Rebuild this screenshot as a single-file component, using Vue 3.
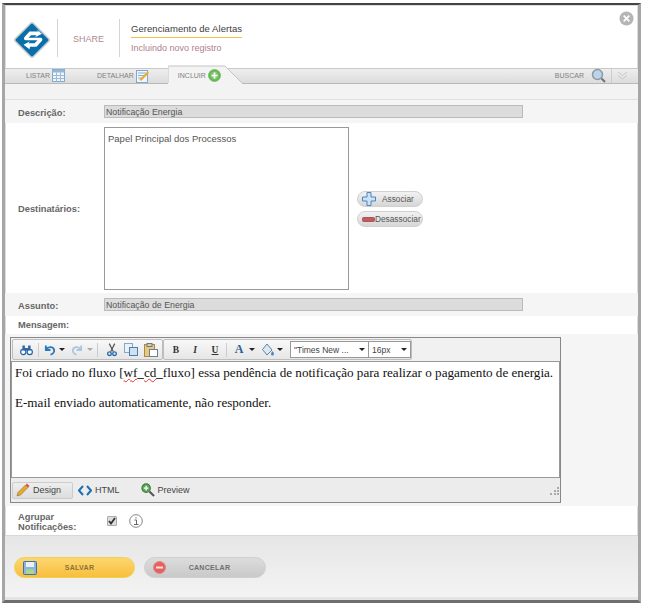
<template>
  <div class="page">
    <div class="win">
      <button class="close" aria-label="Fechar"><svg width="15" height="15" viewBox="0 0 16 16"><circle cx="8" cy="8" r="7.500" fill="#b5b5b5"/><path d="M5 5l6 6M11 5l-6 6" stroke="#fff" stroke-width="1.800"/></svg></button>
      <header class="head">
        <svg class="logo" width="38" height="38" viewBox="0 0 38 38">
          <path d="M17.500 2.500Q19 1 20.500 2.500L35.500 17.500Q37 19 35.500 20.500L20.500 35.500Q19 37 17.500 35.500L2.500 20.500Q1 19 2.500 17.500z" fill="#0a6ea8" stroke="#c9cdd0" stroke-width="1.500"/>
          <path d="M27 10.500H16.500l-5 5.500c-1 1.400-.5 3.300 1.500 3.300h11.500l-3 3h-6l1.500-2-6.500 3.500 6 4.500.5-2.500h6.500l5.500-6c1-1.500 0-3-1.500-3H15.500l2.500-2.500h5.500l-1.500 2 7-3.500-6-4.500z" fill="#fff"/>
        </svg>
        <div class="vline"></div>
        <div class="share">SHARE</div>
        <div class="vline"></div>
        <div class="titles">
          <div class="title">Gerenciamento de Alertas</div>
          <div class="subtitle">Incluindo novo registro</div>
        </div>
      </header>

      <nav class="tabs">
        <div class="tab t1">LISTAR
          <svg width="13" height="13" viewBox="0 0 13 13"><rect x=".5" y=".5" width="12" height="12" fill="#eef5fb" stroke="#7fa9cf"/><rect x=".5" y=".5" width="12" height="3" fill="#8fb8dc"/><path d="M4.500 3.500v9M8.500 3.500v9M.5 6.500h12M.5 9.500h12" stroke="#9dbbd6"/></svg>
        </div>
        <div class="tab t2">DETALHAR
          <svg width="14" height="14" viewBox="0 0 14 14"><rect x=".5" y="1.500" width="11" height="12" fill="#eef5fb" stroke="#7fa9cf"/><path d="M2 4h8M2 6.500h6M2 9h4" stroke="#8fb0cc"/><path d="M5 12l8-8-1.500-1.500-8 8z" fill="#eda92e"/></svg>
        </div>
        <div class="tab t3">
          <svg class="tabshape" width="80" height="19" viewBox="0 0 80 19"><path d="M0 18V2Q0 1 1 1H57L74 18" fill="#f3f3f3" stroke="#c4c4c4"/><path d="M0 18.500H74" stroke="#f3f3f3" stroke-width="1"/></svg>
          <span class="t3in">INCLUIR
            <svg width="13" height="13" viewBox="0 0 13 13"><circle cx="6.500" cy="6.500" r="6" fill="#67b257" stroke="#7fbe71"/><circle cx="6.500" cy="6.500" r="4" fill="#7ec96d"/><path d="M6.500 3.500v6M3.500 6.500h6" stroke="#fff" stroke-width="1.700"/></svg>
          </span>
        </div>
        <div class="search">BUSCAR
          <svg width="15" height="15" viewBox="0 0 15 15"><circle cx="6.500" cy="6.500" r="5" fill="#bcd3e8" stroke="#8b9aa6" stroke-width="1.500"/><path d="M10.500 10.500l3.500 3.500" stroke="#6d7479" stroke-width="2"/></svg>
          <span class="sep"></span>
          <svg width="11" height="9" viewBox="0 0 11 9"><path d="M1 1l4.500 3.500L10 1M1 4.500 5.500 8 10 4.500" fill="none" stroke="#c9c9c9"/></svg>
        </div>
      </nav>
      <div class="strip"></div>

      <div class="row alt r-desc">
        <label class="lbl">Descrição:</label>
        <div class="ro">Notificação Energia</div>
      </div>

      <div class="row r-dest">
        <label class="lbl">Destinatários:</label>
        <div class="listbox">Papel Principal dos Processos</div>
        <div class="assoc">
          <button class="pill">
            <svg width="14" height="14" viewBox="0 0 14 14"><path d="M5 .5h4v4.500h4.500v4H9v4.500H5V9H.5V5H5z" fill="#cfe2f3" stroke="#4b86bd"/></svg>
            <span class="pa">Associar</span>
          </button>
          <button class="pill">
            <svg width="13" height="5" viewBox="0 0 13 5"><rect x=".5" y=".5" width="12" height="4" rx="1" fill="#c05a63" stroke="#a8545b"/></svg>
            <span>Desassociar</span>
          </button>
        </div>
      </div>

      <div class="row alt r-desc">
        <label class="lbl">Assunto:</label>
        <div class="ro">Notificação de Energia</div>
      </div>

      <div class="row r-msg"><label class="lbl">Mensagem:</label></div>

      <div class="alt r-editor">
        <div class="editor">
          <div class="toolbar">
            <div class="group g1">
              <svg class="ic" width="13" height="12" viewBox="0 0 16 13"><circle cx="4" cy="9" r="3.200" fill="#fff" stroke="#1f5fa0" stroke-width="1.400"/><circle cx="12" cy="9" r="3.200" fill="#fff" stroke="#1f5fa0" stroke-width="1.400"/><path d="M3 1h3v6H3zM10 1h3v6h-3zM6 4h4v3H6z" fill="#2a69a8"/></svg>
              <span class="dv m5"></span>
              <svg class="ic m5" width="12" height="12" viewBox="0 0 13 12"><path d="M2 1v5h5M2.500 5.500C4 2.500 10 1.500 11 6c.4 2.500-1.500 4.500-4 5" fill="none" stroke="#2d78b8" stroke-width="2"/></svg>
              <i class="arr m3"></i>
              <svg class="ic m6" width="12" height="12" viewBox="0 0 13 12"><path d="M11 1v5H6M10.500 5.500C9 2.500 3 1.500 2 6c-.4 2.500 1.500 4.500 4 5" fill="none" stroke="#a9c6de" stroke-width="2"/></svg>
              <i class="arr lite m4"></i>
              <span class="dv m4"></span>
              <svg class="ic m9" width="10" height="14" viewBox="0 0 11 14"><path d="M2.500 0 7 9M8.500 0 4 9" stroke="#555" stroke-width="1.300"/><circle cx="2.700" cy="11" r="2" fill="none" stroke="#2d6fae" stroke-width="1.500"/><circle cx="8.300" cy="11" r="2" fill="none" stroke="#2d6fae" stroke-width="1.500"/></svg>
              <svg class="ic m7" width="14" height="13" viewBox="0 0 14 13"><rect x=".5" y=".5" width="8" height="9" fill="#eaf2f9" stroke="#86a7c5"/><rect x="5.500" y="4.500" width="8" height="8" fill="#cfe0f0" stroke="#4a7fb0"/></svg>
              <svg class="ic m6" width="14" height="14" viewBox="0 0 14 14"><rect x=".5" y="1.500" width="10" height="12" fill="#e8c77f" stroke="#a88a4a"/><rect x="3" y=".5" width="5" height="3" fill="#ccc" stroke="#777"/><rect x="5.500" y="6.500" width="8" height="7" fill="#fff" stroke="#6b7f90"/></svg>
            </div>
            <div class="group g2">
              <b class="fmt">B</b>
              <i class="fmt it m9">I</i>
              <u class="fmt m10">U</u>
              <span class="dv m6"></span>
              <span class="fontA m6">A</span>
              <i class="arr m4"></i>
              <svg class="ic m6" width="14" height="14" viewBox="0 0 14 14"><path d="M6 1 1.500 6.500 6 12l5-5z" fill="#dbe7f1" stroke="#5a84a8"/><path d="M11.500 8c1 1.500 1.500 2.200 1.500 3a1.500 1.500 0 0 1-3 0c0-.8.5-1.500 1.500-3z" fill="#4a88bf"/></svg>
              <i class="arr m2"></i>
              <div class="sel sel1 m7"><span>"Times New ...</span><i class="arr"></i></div>
              <div class="sel sel2"><span>16px</span><i class="arr"></i></div>
            </div>
          </div>
          <div class="content">
            <p>Foi criado no fluxo [<span class="sp">wf</span><span class="us">_</span><span class="sp">cd</span><span class="us">_</span>fluxo] essa pendência de notificação para realizar o pagamento de energia.</p>
            <p class="p2">E-mail enviado automaticamente, não responder.</p>
          </div>
          <div class="modes">
            <div class="mode active">
              <svg width="14" height="14" viewBox="0 0 14 14"><path d="M1 13l1-3.500 7.500-7.500 2.500 2.500L4.500 12z" fill="#e9a82e" stroke="#8a6a24" stroke-width=".6"/><path d="M9.500 2l1.500-1.500 2.500 2.500L12 4.500z" fill="#d9534f"/></svg>
              Design
            </div>
            <div class="mode html">
              <svg width="14" height="11" viewBox="0 0 14 11"><path d="M5 1 1 5.500 5 10M9 1l4 4.500L9 10" fill="none" stroke="#1f6fb2" stroke-width="2"/></svg>
              HTML
            </div>
            <div class="mode prev">
              <svg width="14" height="14" viewBox="0 0 15 15"><circle cx="5.500" cy="5.500" r="4.500" fill="#5ca85a" stroke="#3b7a3a" stroke-width="1.200"/><path d="M5.500 3v5M3 5.500h5" stroke="#fff" stroke-width="1.400"/><path d="M9 9l5 5" stroke="#555" stroke-width="2.200"/></svg>
              Preview
            </div>
            <svg class="grip" width="10" height="9" viewBox="0 0 10 9"><path d="M8 0h2v2H8zM5 3h2v2H5zM8 3h2v2H8zM1 6h2v2H1zM5 6h2v2H5zM8 6h2v2H8z" fill="#aaa"/></svg>
          </div>
        </div>
      </div>

      <div class="row r-group">
        <label class="lbl lbl2">Agrupar<br>Notificações:</label>
        <span class="check"><svg width="8" height="8" viewBox="0 0 8 8"><path d="M1 4l2 2.500L7 1" fill="none" stroke="#333" stroke-width="1.800"/></svg></span>
        <svg class="info" width="14" height="14" viewBox="0 0 14 14"><circle cx="7" cy="7" r="6.300" fill="#fff" stroke="#777" stroke-width=".9"/><path d="M5.500 6h2v4.500M5 10.500h4.500M7 3.200v1.300" fill="none" stroke="#666"/></svg>
      </div>

      <footer class="foot">
        <button class="btn save">
          <svg width="14" height="14" viewBox="0 0 14 14"><rect x=".5" y=".5" width="13" height="13" rx="1" fill="#8fb3dc" stroke="#3f6fa8"/><rect x="3" y="1" width="8" height="5" fill="#e9f0f8"/><rect x="3" y="8.500" width="8" height="4.500" fill="#a8d88c"/></svg>
          <span>SALVAR</span>
        </button>
        <button class="btn cancel">
          <svg width="13" height="13" viewBox="0 0 13 13"><circle cx="6.500" cy="6.500" r="6" fill="#e8605c" stroke="#d98a88"/><rect x="3" y="5.500" width="7" height="2" fill="#fbe3e2"/></svg>
          <span>CANCELAR</span>
        </button>
      </footer>
    </div>
  </div>
</template>

<script setup>
</script>

<style>
html, body { margin: 0; background: #fff; }
</style>

<style scoped>
.page { width: 645px; height: 606px; padding: 3px 4px 3px 2px; box-sizing: border-box; font-family: "Liberation Sans", Arial, sans-serif; overflow: hidden; }
.win { position: relative; height: 100%; box-sizing: border-box; background: #fff; border: solid #a6a6a6; border-width: 2px 3px 3px 3px; border-top-color: #444; border-bottom-color: #6e6e6e; box-shadow: inset 0 0 0 1px #ddd; display: flex; flex-direction: column; overflow: hidden; }
.close { position: absolute; top: 6px; right: 4px; padding: 0; border: 0; background: none; width: 15px; height: 15px; }
.head { height: 63px; display: flex; align-items: flex-start; flex: none; box-sizing: border-box; padding-top: 14px; }
.logo { margin: 2px 0 0 8px; flex: none; }
.vline { width: 1px; height: 38px; background: #d4d4d4; }
.logo + .vline { margin-left: 6px; }
.share { width: 61px; text-align: center; font-size: 9px; color: #b08a8f; margin-top: 15px; }
.titles { margin-left: 11px; padding-top: 3px; }
.title { font-size: 9.500px; color: #3c3c3c; padding-bottom: 2px; border-bottom: 1px solid #f2c240; line-height: 13px; letter-spacing: .05px; }
.subtitle { font-size: 9px; color: #b0808a; margin-top: 4px; line-height: 12px; }
.tabs { position: relative; height: 13px; padding-bottom: 1px; flex: none; background: linear-gradient(#eee, #dcdcdc); border-top: 1px solid #c9c9c9; border-bottom: 1px solid #b9b9b9; display: flex; align-items: center; font-size: 7px; color: #808080; }
.tab { display: flex; align-items: center; gap: 2px; }
.t1 { margin-left: 21px; }
.t2 { margin-left: 32px; }
.t3 { position: relative; margin-left: 18px; width: 80px; height: 14px; }
.tabshape { position: absolute; left: 0; top: -4px; }
.t3in { position: relative; display: flex; align-items: center; gap: 2px; padding-left: 10px; height: 100%; }
.search { margin-left: auto; display: flex; align-items: center; margin-right: 10px; }
.search svg:first-of-type { margin-left: 7px; }
.sep { width: 1px; height: 14px; background: #ccc; margin: 0 5px; }
.strip { height: 15px; flex: none; background: #f3f3f3; border-bottom: 1px solid #e0e0e0; }
.row { display: flex; align-items: center; flex: none; }
.alt { background: #f5f5f5; }
.lbl { width: 99px; box-sizing: border-box; padding: 2px 0 0 13px; font-size: 9.300px; font-weight: bold; color: #666; flex: none; }
.r-msg .lbl { padding-top: 0; }
.r-desc { height: 23px; }
.ro { width: 419px; height: 13px; box-sizing: border-box; background: #dcdcdc; border: 1px solid #bbb; font-size: 8.800px; line-height: 12px; color: #555; padding-left: 1px; }
.r-dest { height: 170px; }
.listbox { width: 245px; height: 163px; margin-top: 1px; box-sizing: border-box; border: 1px solid #999; background: #fff; padding: 5px 3px; font-size: 9.500px; line-height: 12px; color: #555; }
.assoc { display: flex; flex-direction: column; gap: 4px; margin: 2px 0 0 8px; }
.pill { width: 66px; height: 16px; padding: 0 0 0 4px; display: flex; align-items: center; border: 1px solid #d0d0d0; border-radius: 8px; background: linear-gradient(#f2f2f2, #d6d6d6); font: 8.300px "Liberation Sans", Arial, sans-serif; color: #555; white-space: nowrap; }
.pa { margin-left: 6px; }
.r-msg { height: 18px; }
.r-editor { height: 172px; flex: none; padding: 3px 0 0 5px; box-sizing: border-box; }
.editor { width: 551px; height: 166px; box-sizing: border-box; border: 1px solid #888; background: #f1f1f1; display: flex; flex-direction: column; }
.toolbar { height: 23px; flex: none; display: flex; align-items: center; padding-left: 1px; }
.group { height: 21px; display: flex; align-items: center; border: 1px solid #bdbdbd; border-radius: 2px; background: linear-gradient(#f8f8f8, #e6e6e6); box-sizing: border-box; padding-left: 7px; }
.g1 { width: 151px; }
.g2 { width: 249px; }
.ic { flex: none; }
.m2 { margin-left: 2px; }
.m3 { margin-left: 3px; }
.m4 { margin-left: 4px; }
.m5 { margin-left: 5px; }
.m6 { margin-left: 6px; }
.m7 { margin-left: 7px; }
.m9 { margin-left: 9px; }
.m10 { margin-left: 10px; }
.dv { width: 1px; height: 14px; background: #ccc; flex: none; }
.arr { display: inline-block; width: 0; height: 0; border: 3px solid transparent; border-top: 3px solid #222; border-bottom: 0; flex: none; }
.arr.lite { border-top-color: #aaa; }
.fmt { font: bold 9.500px "Liberation Serif", serif; color: #333; width: 10px; text-align: center; flex: none; }
.it { font-style: italic; }
.fontA { font: bold 12px "Liberation Serif", serif; color: #2d5f94; width: 12px; text-align: center; flex: none; }
.sel { height: 17px; box-sizing: border-box; background: #fff; border: 1px solid #999; display: flex; align-items: center; justify-content: space-between; font-size: 8.500px; color: #444; padding: 0 3px; flex: none; }
.sel1 { width: 79px; }
.sel2 { width: 43px; margin-left: -1px; }
.content { height: 117px; flex: none; box-sizing: border-box; border: 1px solid #999; background: #fff; padding: 3px 3px; font: 13.110px/15px "Liberation Serif", serif; color: #111; }
.content p { margin: 0; white-space: nowrap; }
.p2 { padding-top: 15px; }
.sp { text-decoration: underline wavy #e33 1px; }
.us { text-decoration: underline #888; }
.modes { position: relative; flex: 1; display: flex; align-items: center; font-size: 9px; color: #444; background: #ececec; }
.mode { display: flex; align-items: center; gap: 3px; }
.active { width: 61px; height: 17px; margin-left: 1px; box-sizing: border-box; padding-left: 3px; border: 1px solid #ccc; border-radius: 2px; background: linear-gradient(#eee, #ddd); }
.html { margin-left: 5px; }
.prev { margin-left: 21px; }
.grip { position: absolute; right: 1px; bottom: 6px; }
.r-group { height: 29px; }
.lbl2 { width: 102px; line-height: 10px; }
.check { width: 10px; height: 10px; box-sizing: border-box; background: #ddd; border: 1px solid #aaa; border-radius: 1px; display: flex; align-items: center; justify-content: center; margin-right: 12px; }
.foot { flex: 1; display: flex; align-items: flex-start; gap: 9px; padding: 21px 0 0 9px; background: linear-gradient(#e6e6e6, #f4f4f4); border-top: 1px solid #d8d8d8; box-shadow: inset 0 -3px 0 #e4e4e4; }
.btn { width: 121px; height: 21px; padding: 0 0 0 8px; display: flex; align-items: center; border-radius: 11px; font: bold 7px "Liberation Sans", Arial, sans-serif; letter-spacing: .3px; color: #777; }
.btn span { flex: 1; text-align: center; padding-right: 12px; }
.save { border: 1px solid #eed24e; background: linear-gradient(#fbd770, #f9be3d); color: #8a7337; }
.cancel { width: 122px; border: 1px solid #cfcfcf; background: linear-gradient(#dcdcdc, #c9c9c9); color: #6f6f6f; }
</style>
